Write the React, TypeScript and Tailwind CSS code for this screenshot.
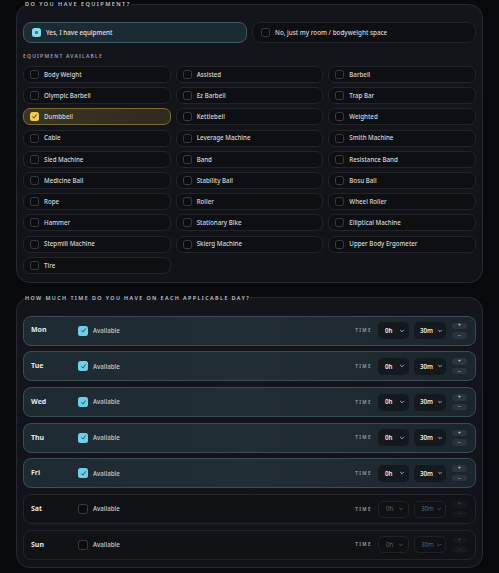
import React from "react";

const EQUIPMENT = [
  "Body Weight",
  "Assisted",
  "Barbell",
  "Olympic Barbell",
  "Ez Barbell",
  "Trap Bar",
  "Dumbbell",
  "Kettlebell",
  "Weighted",
  "Cable",
  "Leverage Machine",
  "Smith Machine",
  "Sled Machine",
  "Band",
  "Resistance Band",
  "Medicine Ball",
  "Stability Ball",
  "Bosu Ball",
  "Rope",
  "Roller",
  "Wheel Roller",
  "Hammer",
  "Stationary Bike",
  "Elliptical Machine",
  "Stepmill Machine",
  "Skierg Machine",
  "Upper Body Ergometer",
  "Tire",
];

const SELECTED = new Set(["Dumbbell"]);

const DAYS = [
  { name: "Mon", on: true },
  { name: "Tue", on: true },
  { name: "Wed", on: true },
  { name: "Thu", on: true },
  { name: "Fri", on: true },
  { name: "Sat", on: false },
  { name: "Sun", on: false },
];

function Check({ color }: { color: string }) {
  return (
    <svg viewBox="0 0 10 10" className="h-[7px] w-[7px]" fill="none">
      <path
        d="M2.4 5.4 L4.2 7.3 L7.8 2.4"
        stroke={color}
        strokeWidth="1.3"
        strokeLinecap="round"
        strokeLinejoin="round"
      />
    </svg>
  );
}

function Chevron({ dim }: { dim: boolean }) {
  return (
    <svg viewBox="0 0 10 10" className="h-[6px] w-[6px] shrink-0" fill="none">
      <path
        d="M2.5 3.8 L5 6.3 L7.5 3.8"
        stroke={dim ? "#555961" : "#c9ccd1"}
        strokeWidth="1.4"
        strokeLinecap="round"
        strokeLinejoin="round"
      />
    </svg>
  );
}

function EquipmentItem({ label }: { label: string }) {
  const on = SELECTED.has(label);
  return (
    <div
      className={
        on
          ? "flex h-[17px] items-center gap-[5px] rounded-[7px] border border-[#7b6b37] bg-[linear-gradient(90deg,#3a3421,#2f2b1e)] pl-[6px]"
          : "flex h-[17px] items-center gap-[5px] rounded-[7px] border border-[#22242a] bg-[#0e0f13] pl-[6px]"
      }
    >
      {on ? (
        <span className="flex h-[9px] w-[9px] items-center justify-center rounded-[2.5px] bg-[#f1cd58]">
          <Check color="#3d3210" />
        </span>
      ) : (
        <span className="h-[9px] w-[9px] rounded-[2.5px] border border-[#393c43] bg-[#0b0c0f]" />
      )}
      <span className="text-[6.2px] font-medium text-[#d8d9dc]">{label}</span>
    </div>
  );
}

function DayRow({ name, on }: { name: string; on: boolean }) {
  const select = on
    ? "flex h-[17px] items-center justify-between rounded-[5px] bg-[#14191d] pl-[7px] pr-[4px]"
    : "flex h-[17px] items-center justify-between rounded-[5px] border border-[#202227] bg-[#101115] pl-[7px] pr-[4px]";
  const value = on
    ? "text-[6.2px] font-semibold text-[#eef0f2]"
    : "text-[6.2px] text-[#5c6068]";
  const step = on
    ? "flex h-[6.5px] items-center justify-center rounded-full bg-[#2b343a] text-[5px] leading-none text-[#e3e5e8]"
    : "flex h-[6.5px] items-center justify-center rounded-full bg-[#17181c] text-[5px] leading-none text-[#4f535a]";
  return (
    <div
      className={
        on
          ? "flex h-[30px] items-center rounded-[8px] border border-[#3a4c56] bg-[linear-gradient(90deg,#1e2a31,#222e36_50%,#1b252c)] pl-[7px] pr-[8px]"
          : "flex h-[30px] items-center rounded-[8px] border border-[#23252b] bg-[#111216] pl-[7px] pr-[8px]"
      }
    >
      <span className="w-[47px] text-[7px] font-bold text-[#e6e8eb]">{name}</span>
      {on ? (
        <span className="flex h-[10px] w-[10px] items-center justify-center rounded-[2.5px] bg-[#6fcfe8]">
          <Check color="#1d4a66" />
        </span>
      ) : (
        <span className="h-[10px] w-[10px] rounded-[2.5px] border border-[#393c43] bg-[#0b0c0f]" />
      )}
      <span className="ml-[5px] text-[6.2px] font-medium text-[#c8cbcf]">Available</span>
      <span className="ml-auto mr-[6px] text-[4.5px] font-bold tracking-[0.32em] text-[#90959c]">
        TIME
      </span>
      <div className={`${select} w-[31px]`}>
        <span className={value}>0h</span>
        <Chevron dim={!on} />
      </div>
      <div className={`${select} ml-[5px] w-[32px] !pl-[6px] !pr-[3px]`}>
        <span className={value}>30m</span>
        <Chevron dim={!on} />
      </div>
      <div className="ml-[6px] flex w-[15px] flex-col gap-[3px]">
        <span className={step}>+</span>
        <span className={step}>−</span>
      </div>
    </div>
  );
}

export default function App() {
  return (
    <div className="min-h-screen w-full bg-[#08090c] font-['Noto_Sans',sans-serif]">
      <div className="mx-auto w-[499px] px-4 pb-[5px]">
        <fieldset className="rounded-[14px] border border-[#272930] bg-[linear-gradient(180deg,#14151b,#121318)] px-[6px] pb-[8px] pt-[14px]">
          <legend className="ml-[2px] h-[8px] text-[5.6px] font-semibold uppercase leading-[8px] tracking-[0.25em] text-[#c3c6cc]">
            Do you have equipment?
          </legend>
          <div className="grid grid-cols-2 gap-[5px]">
            <div className="flex h-[21px] items-center gap-[5px] rounded-[8px] border border-[#3d5b66] bg-[#1c2b32] pl-[8px]">
              <span className="flex h-[9px] w-[9px] items-center justify-center rounded-[2.5px] bg-[#86dcf2]">
                <span className="h-[3px] w-[3px] rounded-[1px] bg-[#2d7994]" />
              </span>
              <span className="text-[6.3px] font-medium text-[#e2e5e8]">Yes, I have equipment</span>
            </div>
            <div className="flex h-[21px] items-center gap-[5px] rounded-[8px] border border-[#22242a] bg-[#0e0f13] pl-[8px]">
              <span className="h-[9px] w-[9px] rounded-[2.5px] border border-[#393c43] bg-[#0b0c0f]" />
              <span className="text-[6.3px] font-medium text-[#d8d9dc]">No, just my room / bodyweight space</span>
            </div>
          </div>
          <div className="mt-[9px] h-[8px] text-[5px] font-semibold uppercase leading-[8px] tracking-[0.24em] text-[#9ea2a9]">
            Equipment available
          </div>
          <div className="mt-[6px] grid grid-cols-3 gap-x-[5px] gap-y-[4.2px]">
            {EQUIPMENT.map((label) => (
              <EquipmentItem key={label} label={label} />
            ))}
          </div>
        </fieldset>

        <fieldset className="mt-[11px] rounded-[14px] border border-[#272930] bg-[linear-gradient(180deg,#14151b,#121318)] px-[6px] pb-[7px] pt-[14px]">
          <legend className="ml-[2px] h-[8px] text-[5.4px] font-semibold uppercase leading-[8px] tracking-[0.26em] text-[#c3c6cc]">
            How much time do you have on each applicable day?
          </legend>
          <div className="flex flex-col gap-[5.7px]">
            {DAYS.map((d) => (
              <DayRow key={d.name} name={d.name} on={d.on} />
            ))}
          </div>
        </fieldset>
      </div>
    </div>
  );
}
